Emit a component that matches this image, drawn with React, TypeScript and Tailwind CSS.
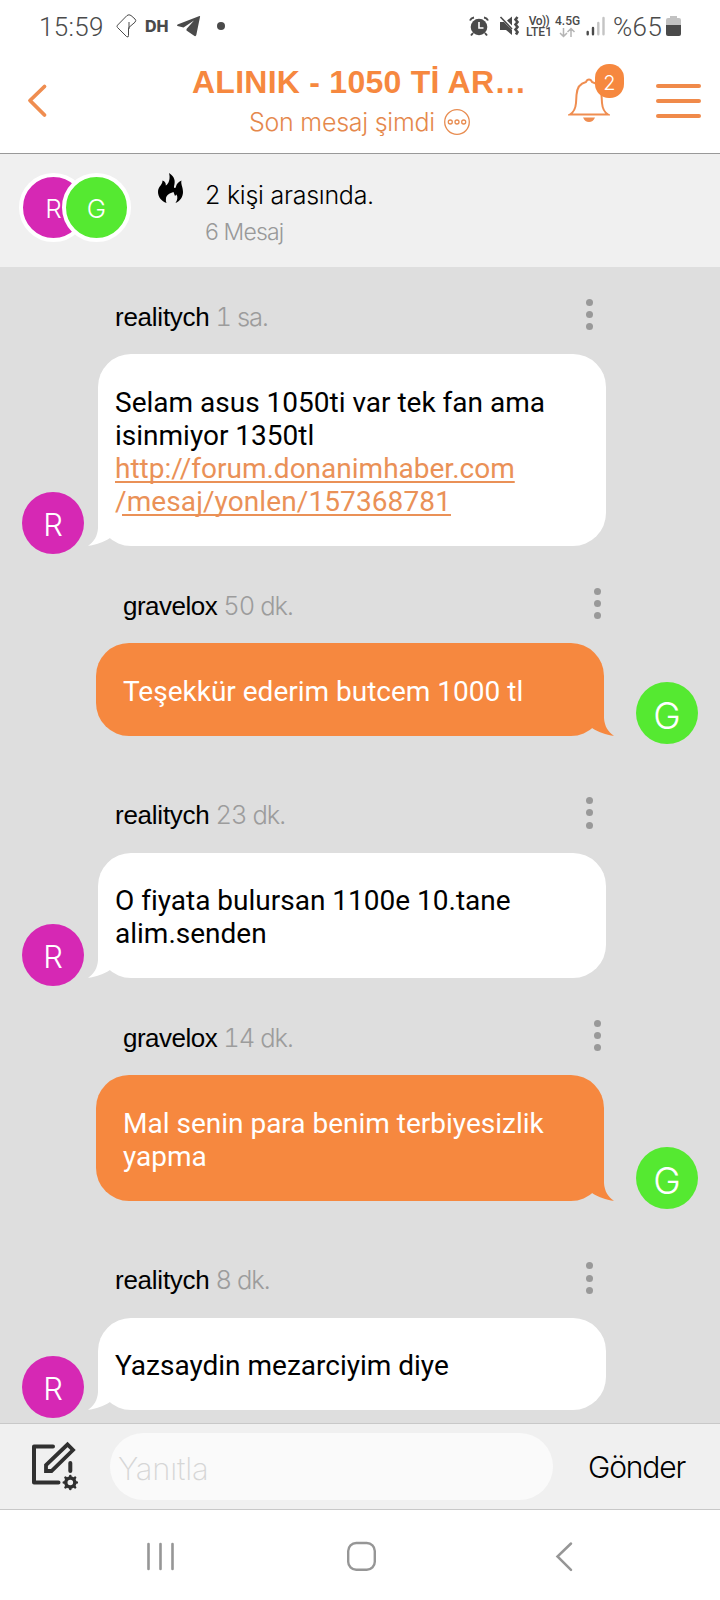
import type { ReactNode } from "react";

const HELV = "font-['Inter','Liberation_Sans',sans-serif]";

function StatusBar() {
  return (
    <div className="flex h-[52px] w-full items-center text-[#4a4a4a] font-['Roboto',sans-serif]">
      <div className="ml-[39px] w-[66px] pt-[1px] text-[26px] font-light leading-[30px] tracking-[0.3px]">15:59</div>
      <svg className="ml-[10px]" width="24" height="26" viewBox="0 0 24 26" fill="none" stroke="#4a4a4a" strokeWidth="1">
        <path d="M12 2.500Q14 1 16 2.500L20 6Q21.500 7.500 20 9.200L15 13.500Q13.500 14 13.500 16V22.500Q13.500 25 11.500 23.500L2.500 14.500Q1.500 13.500 2.500 12.200ZM14 9V16" />
      </svg>
      <div className="ml-[6px] w-[26px] font-['Inter',sans-serif] text-[16px] font-extrabold leading-5">DH</div>
      <svg className="ml-[5px]" width="25" height="22" viewBox="0 0 25 22" fill="#4a4a4a">
        <path d="M23.500 1L1.500 9.500Q0.500 10.500 1.500 11L7.500 12.500L18 5.500L10.500 14V15.500L18.500 21Q20 21.500 20.300 20L24 2Q24.500 1 23.500 1Z" />
      </svg>
      <div className="ml-[16px] size-2 rounded-full bg-[#4a4a4a]" />
      <div className="flex-1" />
      <svg width="20" height="21" viewBox="0 0 20 21" fill="#4a4a4a">
        <circle cx="10" cy="11" r="8.300" />
        <path d="M1 4.500Q2 2 5 1.500M19 4.500Q18 2 15 1.500M4 17L2 19.500M16 17L18 19.500" stroke="#4a4a4a" strokeWidth="2" fill="none" />
        <path d="M10 6V12H14.500" stroke="#fff" strokeWidth="1.600" fill="none" />
      </svg>
      <svg className="ml-[10px]" width="21" height="22" viewBox="0 0 21 22" fill="#4a4a4a">
        <path d="M1 7H5L13 15V20L7 15H1ZM8 5.500L13 1.500V10.500Z" />
        <path d="M1.500 2L13 14" stroke="#4a4a4a" strokeWidth="1.600" />
        <path d="M18.500 2L16.500 4.500L18.500 7L16.500 9.500L18.500 12L16.500 14.500L18.500 17L17 19.500" stroke="#4a4a4a" strokeWidth="2.600" fill="none" />
      </svg>
      <div className="ml-[6px] w-[26px] pt-[2px] text-center text-[12px] font-medium leading-[11px]">
        <div className="whitespace-nowrap tracking-[-0.6px]">Vo))</div>
        <div className="whitespace-nowrap">LTE1</div>
      </div>
      <div className="ml-[3px] w-[26px] pt-[2px]">
        <div className="whitespace-nowrap text-[12px] font-medium leading-[11px]">4.5G</div>
        <svg width="26" height="11" viewBox="0 0 26 11" fill="none" stroke="#b5b5b5" strokeWidth="1.500">
          <path d="M8.500 1V9.500M5 6L8.500 9.500L12 6M16 10V1.500M12.500 5L16 1.500L19.500 5" />
        </svg>
      </div>
      <svg className="ml-[5px]" width="19" height="20" viewBox="0 0 19 20" strokeWidth="2.400" strokeLinecap="round">
        <path d="M1.700 16V18.300M7 12V18.300" stroke="#4a4a4a" />
        <path d="M12.300 7V18.300M17.500 2V18.300" stroke="#c4c4c4" />
      </svg>
      <div className="ml-[8px] w-[50px] whitespace-nowrap pt-[1px] text-[26px] font-light leading-[30px] tracking-[0.4px]">%65</div>
      <svg className="ml-[3px] mr-[39px]" width="15" height="22" viewBox="0 0 15 22">
        <path d="M4 1H11V3H13Q15 3 15 5V10H0V5Q0 3 2 3H4Z" fill="#c2c2c2" />
        <path d="M0 10H15V19Q15 21 13 21H2Q0 21 0 19Z" fill="#4a4a4a" />
      </svg>
    </div>
  );
}

function Header() {
  return (
    <header className="flex h-[102px] w-full items-start border-b border-[#999] text-[#f6883f]">
      <svg className="ml-[26px] mt-[31px]" width="22" height="35" viewBox="0 0 22 35" fill="none" stroke="#ef8d50" strokeWidth="3.800" strokeLinecap="round">
        <path d="M18.500 3.500L4 17.500L18.500 32" strokeLinejoin="round" />
      </svg>
      <div className="ml-[133px] mt-[10px] w-[353px]">
        <div className="ml-[11px] whitespace-nowrap font-['Liberation_Sans',sans-serif] text-[32px] font-bold leading-[40px] tracking-[0.25px]">
          ALINIK - 1050 Tİ AR…
        </div>
        <div className="ml-[68px] flex items-center text-[#e5884c]">
          <span className={`${HELV} mt-[1px] w-[186px] whitespace-nowrap text-[25px] font-light leading-[38px] tracking-[-0.25px]`}>Son mesaj şimdi</span>
          <svg className="ml-[8px]" width="28" height="28" viewBox="0 0 28 28" fill="none" stroke="#e88c50" strokeWidth="1.300">
            <circle cx="14" cy="14" r="12.300" />
            <circle cx="7.300" cy="14" r="2" />
            <circle cx="14" cy="14" r="2" />
            <circle cx="20.700" cy="14" r="2" />
          </svg>
        </div>
      </div>
      <div className="relative ml-[34px] mt-[26px] h-[46px] w-[42px]">
        <svg width="42" height="46" viewBox="0 0 42 46" fill="none" stroke="#ef8d50" strokeWidth="2">
          <path d="M2 36.500H40C36 34 34.500 31 34 25L33.500 17C33 9 28.500 5 24 4Q23 1.500 21 1.500Q19 1.500 18 4C13.500 5 9 9 8.500 17L8 25C7.500 31 6 34 2 36.500Z" />
          <path d="M15 39.500H27Q25 44 21 44Q17 44 15 39.500Z" fill="#ef8d50" stroke="none" />
        </svg>
        <div className={`${HELV} absolute -top-[14px] left-[27px] flex h-[34px] w-[29px] items-center justify-center rounded-[14px] bg-[#f6883f] pt-[3px] text-[20px] font-light text-white`}>2</div>
      </div>
      <div className="ml-[46px] mt-[32px] flex w-[45px] flex-col gap-[11px]">
        <div className="h-[4px] rounded-full bg-[#f08a4a]" />
        <div className="h-[4px] rounded-full bg-[#f08a4a]" />
        <div className="h-[4px] rounded-full bg-[#f08a4a]" />
      </div>
    </header>
  );
}

function Summary() {
  return (
    <section className={`${HELV} flex h-[113px] w-full items-start bg-[#f0f0f0] font-light`}>
      <div className="ml-[19px] mt-[18.500px] flex text-[26px] text-white">
        <div className="flex size-[69px] items-center justify-center rounded-full border-4 border-white bg-[#d628b4] pt-[3px]">R</div>
        <div className="-ml-[26px] flex size-[69px] items-center justify-center rounded-full border-4 border-white bg-[#55e931] pt-[3px]">G</div>
      </div>
      <svg className="ml-[27px] mt-[19px]" width="26" height="31" viewBox="0 0 26 31" fill="#000">
        <path d="M11 0C17 4 17.500 8 16 13.500C16 15.500 17.500 15.500 18 13.500C18.500 11 20 9 23.500 7.500C22.500 11 25 14 25 19C25 24 22 28 17.500 30C19.500 27 20 24 18.500 21.500L17 23L15.500 19C12 20 8.500 22 8 25Q7.500 28 8.500 30C3.500 28 0 24 0 19C0 13 4.500 12.500 4.500 7.500C7 8.500 8 10 7.800 12.500C11 11 12.500 5 11 0Z" />
      </svg>
      <div className="ml-[21px] mt-[21px]">
        <div className="whitespace-nowrap text-[25px] leading-[40px] tracking-[-0.25px] text-black">2 kişi arasında.</div>
        <div className="mt-[-1px] whitespace-nowrap text-[23px] leading-[36px] tracking-[-0.85px] text-[#999]">6 Mesaj</div>
      </div>
    </section>
  );
}

type MessageProps = { user: string; time: string; mine?: boolean; children: ReactNode };

function Message({ user, time, mine = false, children }: MessageProps) {
  const left = mine ? "pl-[123px]" : "pl-[115px]";
  const right = mine ? "pr-[119px]" : "pr-[127px]";
  return (
    <article className={mine ? "mb-[30px]" : "mb-[10.500px]"}>
      <div className={`flex h-[87px] items-start justify-between ${left} ${right}`}>
        <div className={`whitespace-nowrap leading-[40px] ${mine ? "mt-[30px]" : "mt-[29.600px]"}`}>
          <span className={`font-['Liberation_Sans',sans-serif] text-[26px] text-black ${mine ? "tracking-[-0.5px]" : "tracking-[-0.25px]"}`}>{user}</span>
          <span className={`${HELV} ml-[6px] text-[25.500px] font-light tabular-nums tracking-[-1px] text-[#9c9c9c]`}>{time}</span>
        </div>
        <div className="mt-[31.500px] flex flex-col gap-[5.250px]">
          <i className="size-[7px] rounded-full bg-[#999]" />
          <i className="size-[7px] rounded-full bg-[#999]" />
          <i className="size-[7px] rounded-full bg-[#999]" />
        </div>
      </div>
      <div className={mine ? "flex items-end pl-[96px]" : "flex items-end pl-[22px]"}>
        {!mine && (
          <div className={`${HELV} -mb-[8px] mr-[14px] flex size-[62px] items-center justify-center rounded-full bg-[#d628b4] pt-[4px] text-[31px] font-light text-white`}>R</div>
        )}
        <div className={`relative w-[507.500px] rounded-[33px] pb-[27.500px] pt-[31.500px] font-['Roboto',sans-serif] text-[28px] leading-[33.200px] [font-variant-ligatures:none] ${mine ? "bg-[#f6883f] pl-[27px] text-white" : "bg-white pl-[17px] text-black"}`}>
          <div className="whitespace-nowrap">{children}</div>
          <svg
            className={mine ? "absolute -right-[10px] bottom-0 -scale-x-100" : "absolute -left-[10px] bottom-0"}
            width="34" height="40" viewBox="0 0 34 40" fill={mine ? "#f6883f" : "#fff"}
          >
            <path d="M10 7V22C9.500 30 6 36 0 39.800C8 39 16 36 22 32L34 20V7Z" />
          </svg>
        </div>
        {mine && (
          <div className={`${HELV} -mb-[8px] ml-[32.500px] flex size-[62px] items-center justify-center rounded-full bg-[#55e931] pt-[6px] text-[37px] font-light text-white`}>G</div>
        )}
      </div>
    </article>
  );
}

function Composer() {
  return (
    <footer className={`${HELV} flex h-[87px] w-full items-start border-y border-[#c8c8c8] bg-[#f0f0f0]`}>
      <svg className="ml-[32px] mt-[17px]" width="48" height="50" viewBox="0 0 48 50" fill="none" stroke="#303030" strokeWidth="4" strokeLinejoin="round" strokeLinecap="round">
        <path d="M21 5.500H2V41.500H26.500" />
        <path d="M14 30V24L35.500 3.500L41 9L19.500 30Z" strokeWidth="3.800" strokeLinejoin="miter" />
        <path d="M38.300 22V30" />
        <circle cx="38.300" cy="41.500" r="4.500" strokeWidth="3.400" />
        <path d="M38.300 36V35M38.300 47V48M32.800 41.500H31.800M43.800 41.500H44.800M34.400 37.600L33.500 36.700M42.200 37.600L43.100 36.700M34.400 45.400L33.500 46.300M42.200 45.400L43.100 46.300" strokeWidth="2.600" />
      </svg>
      <div className="ml-[30px] mt-[9px] flex h-[67px] w-[443px] items-center rounded-full bg-[#fafafa] pl-[8px] pt-[6px] text-[31px] font-extralight tracking-[-0.2px] text-[#d6d6d6]">Yanıtla</div>
      <div className="ml-[35px] mt-[23px] whitespace-nowrap text-[30px] font-light leading-[40px] tracking-[-1.15px] text-black">Gönder</div>
    </footer>
  );
}

function NavBar() {
  return (
    <nav className="flex h-[90px] w-full items-start bg-white pt-[31px]">
      <svg className="ml-[146px]" width="29" height="30" viewBox="0 0 29 30" stroke="#969696" strokeWidth="2.600" strokeLinecap="round">
        <path d="M2.500 3V28M14.500 3V28M26.500 3V28" />
      </svg>
      <svg className="ml-[171px]" width="32" height="30" viewBox="0 0 32 30" fill="none" stroke="#969696" strokeWidth="2.400">
        <rect x="2.200" y="2" width="26.600" height="26.800" rx="8" />
      </svg>
      <svg className="ml-[176.500px]" width="20" height="32" viewBox="0 0 20 32" fill="none" stroke="#969696" strokeWidth="2.500" strokeLinecap="round">
        <path d="M16 2.500L2.500 15.500L16 28.800" />
      </svg>
    </nav>
  );
}

export default function App() {
  return (
    <div className="flex h-[1600px] w-[720px] flex-col overflow-hidden bg-white">
      <StatusBar />
      <Header />
      <Summary />
      <main className="h-[1156px] w-full overflow-hidden bg-[#dedede]">
        <Message user="realitych" time="1 sa.">
          Selam asus 1050ti var tek fan ama<br />
          isinmiyor 1350tl<br />
          <a className="text-[#ea9157] underline decoration-2 underline-offset-[3px] [text-decoration-skip-ink:none]">
            http://forum.donanimhaber.com<br />
            <span className="tracking-[0.1px]">/mesaj/yonlen/157368781</span>
          </a>
        </Message>
        <Message user="gravelox" time="50 dk." mine>Teşekkür ederim butcem 1000 tl</Message>
        <Message user="realitych" time="23 dk.">O fiyata bulursan 1100e 10.tane<br />alim.senden</Message>
        <Message user="gravelox" time="14 dk." mine>Mal senin para benim terbiyesizlik<br />yapma</Message>
        <Message user="realitych" time="8 dk.">Yazsaydin mezarciyim diye</Message>
      </main>
      <Composer />
      <NavBar />
    </div>
  );
}
